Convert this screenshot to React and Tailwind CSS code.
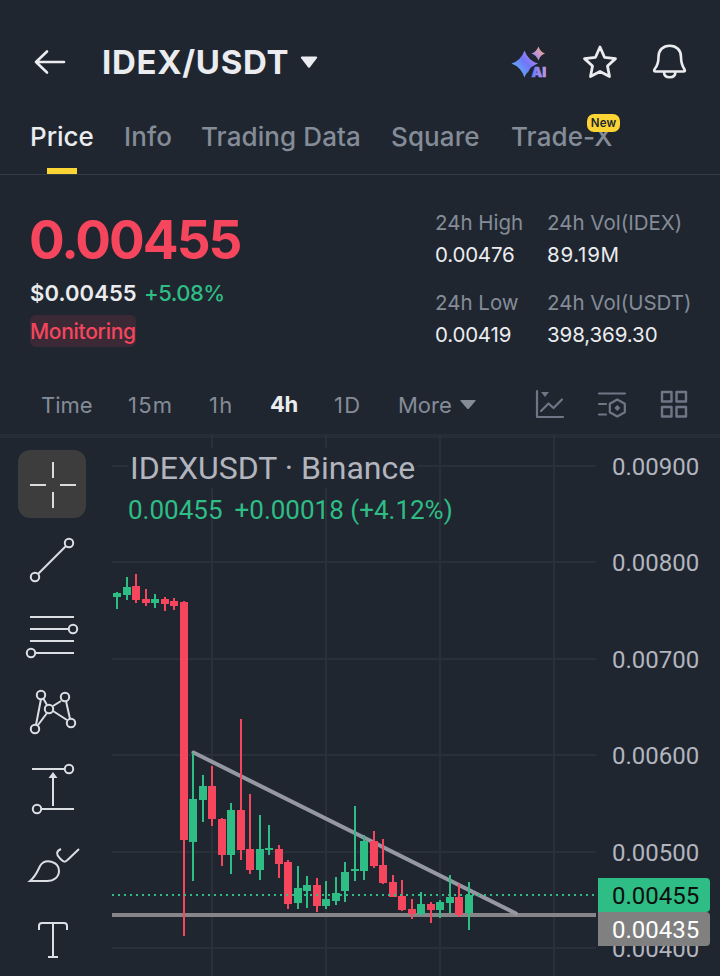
import React from 'react';

const GREEN = '#2ebd85';
const RED = '#f6465d';

const tabs = ['Price', 'Info', 'Trading Data', 'Square', 'Trade-X'];

const stats = [
  { label: '24h High', value: '0.00476' },
  { label: '24h Vol(IDEX)', value: '89.19M' },
  { label: '24h Low', value: '0.00419' },
  { label: '24h Vol(USDT)', value: '398,369.30' },
];

const intervals = ['Time', '15m', '1h', '4h', '1D'];

const axisLabels = ['0.00900', '0.00800', '0.00700', '0.00600', '0.00500', '0.00400'];

// [x, body top, body bottom, wick top, wick bottom, up]
const candles = [
  [113, 593, 597, 592, 609, 1],
  [123, 587, 595, 577, 600, 1],
  [132, 586, 600, 574, 603, 0],
  [142, 599, 603, 589, 606, 0],
  [151, 599, 603, 594, 608, 1],
  [161, 599, 604, 597, 611, 0],
  [170, 601, 606, 598, 610, 0],
  [180, 602, 840, 601, 936, 0],
  [189, 799, 842, 753, 881, 1],
  [199, 786, 800, 775, 822, 1],
  [208, 786, 819, 766, 826, 0],
  [218, 819, 855, 818, 866, 0],
  [227, 810, 855, 803, 874, 1],
  [237, 810, 850, 719, 860, 0],
  [246, 849, 870, 794, 874, 0],
  [256, 849, 870, 815, 880, 1],
  [265, 848, 850, 825, 855, 1],
  [275, 849, 864, 845, 878, 0],
  [284, 862, 904, 860, 909, 0],
  [294, 888, 903, 866, 909, 1],
  [303, 885, 891, 876, 908, 1],
  [313, 885, 906, 878, 912, 0],
  [322, 899, 906, 881, 909, 1],
  [332, 893, 901, 877, 905, 1],
  [341, 872, 891, 862, 902, 1],
  [351, 869, 871, 806, 881, 1],
  [360, 841, 871, 835, 880, 1],
  [370, 841, 866, 831, 868, 0],
  [379, 865, 883, 839, 884, 0],
  [389, 882, 897, 875, 897, 0],
  [398, 896, 910, 880, 911, 0],
  [408, 909, 914, 899, 919, 0],
  [417, 904, 914, 892, 915, 1],
  [427, 904, 910, 902, 923, 0],
  [436, 902, 910, 900, 918, 1],
  [446, 897, 903, 875, 913, 1],
  [455, 897, 915, 884, 917, 0],
  [465, 895, 913, 882, 930, 1],
];

const Header = () => (
  <header className="flex h-28 items-center pt-3 pl-[34px]">
    <svg width="32" height="26" viewBox="34 49 32 26" fill="none" stroke="#eaecef" strokeWidth="2.600" strokeLinecap="round" strokeLinejoin="round">
      <path d="M64 62H36M47 51.5L36 62l11 10.5" />
    </svg>
    <h1 className="ml-9 w-[188px] text-[33px] leading-10 font-bold whitespace-nowrap tracking-[0.7px] text-[#eaecef]">IDEX/USDT</h1>
    <svg className="ml-[10px]" width="18" height="13" viewBox="0 0 18 13" fill="#eaecef">
      <path d="M2 .5h14q2 0 .8 1.700L10 11.200q-1 1.200-2 0L1.200 2.200Q0 .5 2 .5z" />
    </svg>
    <svg className="ml-[193px]" width="38" height="34" viewBox="511 45 38 34">
      <defs>
        <linearGradient id="ai" gradientUnits="userSpaceOnUse" x1="514" y1="74" x2="545" y2="49">
          <stop offset="0" stopColor="#56b9f5" />
          <stop offset="0.42" stopColor="#7375f7" />
          <stop offset="0.68" stopColor="#a78bf2" />
          <stop offset="1" stopColor="#ffad76" />
        </linearGradient>
        <linearGradient id="aiText" x1="0" x2="1">
          <stop offset="0" stopColor="#6878f8" />
          <stop offset="1" stopColor="#c69ae6" />
        </linearGradient>
      </defs>
      <path fill="url(#ai)" d="M524.500 50.500q3.500 10 13.500 13-3 1-5.500 3-2 .5-4 5-2.500 1.500-4 6-3.500-10.500-13-14 9.500-3 13-13z" />
      <path fill="url(#ai)" d="M538.500 46.500q1.700 5.300 6.500 7-4.800 1.700-6.500 7-2.200-5.300-7-7 4.800-1.700 7-7z" />
      <text x="531.500" y="76.500" fill="url(#aiText)" stroke="url(#aiText)" strokeWidth="0.500" fontSize="13.500" fontWeight="900" fontFamily="Inter, sans-serif">AI</text>
    </svg>
    <svg className="ml-[33px]" width="36" height="36" viewBox="582 45 36 36" fill="none" stroke="#eaecef" strokeWidth="2.800" strokeLinejoin="round">
      <path d="M600 48l4.500 10.300 11 1.300-8 7.400 2 10.500-9.500-5-9.500 5 2-10.500-8-7.400 11-1.300z" />
    </svg>
    <svg className="ml-[33px]" width="38" height="40" viewBox="651 42 38 40" fill="none" stroke="#eaecef" strokeWidth="2.600" strokeLinejoin="round">
      <path d="M658.500 57c0-7 4.500-11.200 11.200-11.200S681 50 681 57c0 6 1 8.500 3.300 12 1.300 2 .5 2.500-1 2.500h-27.600c-1.500 0-2.200-.8-1-2.500 3-3.500 3.800-6.500 3.800-12z" />
      <path d="M664 72c0 3.500 2.500 5.300 5.700 5.300s5.700-1.800 5.700-5.300" />
    </svg>
  </header>
);

const Tabs = () => (
  <nav className="grid h-[63px] grid-cols-[94px_77px_190px_120px_auto] border-b border-[#333b45] pl-[30px] text-[26px] leading-[50px] font-medium whitespace-nowrap">
    {tabs.map((tab, i) => (
      <div key={tab} className={i === 0 ? 'relative text-[#eaecef]' : 'relative tracking-[0.1px] text-[#848c98]'}>
        {tab}
        {i === 0 && <span className="absolute bottom-0 left-[17px] h-[6px] w-[30px] bg-[#fcd535]" />}
        {i === 4 && (
          <span className="absolute top-[2px] left-[76px] flex h-[18px] w-[33px] items-center justify-center rounded-[7px] bg-[#fcd535] pt-px text-[11.500px] leading-none font-semibold text-[#202630]">New</span>
        )}
      </div>
    ))}
  </nav>
);

const Summary = () => (
  <section className="flex h-[200px] pt-8 pl-[30px]">
    <div className="w-[405px]">
      <div className="-ml-px h-[66px] text-[53px] leading-[66px] font-[650] tracking-[-2px] text-[#f6465d]">0.00455</div>
      <div className="flex gap-[7px] pt-1 text-[22px] leading-8">
        <span className="w-[107px] font-semibold tracking-[0.1px] text-[#eaecef]">$0.00455</span>
        <span className="font-medium tracking-[-0.5px] text-[#2ebd85]">+5.08%</span>
      </div>
      <div className="mt-[6px] h-8 w-[106px] rounded-md bg-[#3b2a35] text-[21px] leading-[34px] font-medium tracking-[-0.3px] text-[#f6465d]">Monitoring</div>
    </div>
    <div className="grid h-36 grid-cols-[112px_auto] content-start gap-y-4 text-[20.500px] leading-8 whitespace-nowrap">
      {stats.map((s) => (
        <div key={s.label}>
          <div className="text-[#848c98]">{s.label}</div>
          <div className={s.value.startsWith('0.') ? 'tracking-[-0.2px] text-[#eaecef]' : s.value.endsWith('M') ? 'tracking-[0.7px] text-[#eaecef]' : 'tracking-[-0.1px] text-[#eaecef]'}>{s.value}</div>
        </div>
      ))}
    </div>
  </section>
);

const Intervals = () => (
  <div className="flex h-[59px] items-center pl-[41px] text-[22px] whitespace-nowrap text-[#848c98]">
    <div className="grid grid-cols-[87px_81px_61px_64px_64px_auto]">
      {intervals.map((t) => (
        <span key={t} className={t === '4h' ? 'font-bold tracking-[-0.5px] text-[#eaecef]' : t.startsWith('1') ? 'pt-px tracking-[1.200px]' : 'pt-px'}>{t}</span>
      ))}
      <span className="w-[55px] pt-px">More</span>
    </div>
    <svg className="ml-[7px]" width="16" height="10" viewBox="0 0 16 10" fill="#848c98">
      <path d="M1 0h14q1 0 .5 1L9 8.500q-1 1-2 0L.5 1Q0 0 1 0z" />
    </svg>
    <svg className="ml-[58px]" width="32" height="32" viewBox="534 389 32 32" fill="none" stroke="#6f7787" strokeWidth="2.200" strokeLinecap="round" strokeLinejoin="round">
      <path d="M537 391v26h26M541 411l7.500-7.500 5 4.500 8.500-8.500" />
      <path d="M541 392h8l-4 5z" fill="#6f7787" stroke="none" />
    </svg>
    <svg className="ml-[30px]" width="32" height="32" viewBox="596 389 32 32" fill="none" stroke="#6f7787" strokeWidth="2.200" strokeLinecap="round" strokeLinejoin="round">
      <path d="M599 393.500h26M599 404h7M599 414.500h7M617.300 399.500l7.500 4.200v8.600l-7.500 4.200-7.500-4.200v-8.600z" />
      <path d="M617.300 405l3 3-3 3-3-3z" fill="#6f7787" stroke="none" />
    </svg>
    <svg className="ml-[30px]" width="32" height="32" viewBox="658 389 32 32" fill="none" stroke="#6f7787" strokeWidth="2.400" strokeLinejoin="round">
      <path d="M662 392h9.500v9.500H662zM676.500 392h9.500v9.500h-9.500zM662 407h9.500v9.500H662zM676.500 407h9.500v9.500h-9.500z" />
    </svg>
  </div>
);

const Toolbar = () => (
  <div className="w-28 pt-4 pl-[18px]">
    <div className="h-[68px] w-[68px] rounded-xl bg-[#3d3d3d]">
      <svg width="68" height="68" viewBox="18 450 68 68" stroke="#dbdbdb" strokeWidth="2">
        <path d="M53 462v16M53 492v16M30 485h16M60 485h16" />
      </svg>
    </div>
    <svg width="68" height="458" viewBox="18 518 68 458" fill="none" stroke="#dbdfe4" strokeWidth="2">
      <path d="M38 574l28-28" />
      <circle cx="69" cy="543" r="4.200" />
      <circle cx="35" cy="577" r="4.200" />

      <path d="M30 617h44M30 629h38M30 641h44M36 653h38" />
      <circle cx="73" cy="629" r="4.200" />
      <circle cx="31" cy="653" r="4.200" />

      <path d="M36 725l5-26M43 698l4 7M53 706l8-5M66 701l4 18M38 725l9-12M53 711l14 9" />
      <circle cx="41" cy="695" r="4.200" />
      <circle cx="65" cy="697" r="4.200" />
      <circle cx="49" cy="709" r="4.200" />
      <circle cx="71" cy="723" r="4.200" />
      <circle cx="35" cy="729" r="4.200" />

      <path d="M32 769h32M42 809h32M53 806v-30" />
      <path d="M53 772l4.500 6h-9z" fill="#dbdfe4" stroke="none" />
      <circle cx="69" cy="769" r="4.200" />
      <circle cx="37" cy="809" r="4.200" />

      <path d="M30 881c6-5 8-11 10-15 5-8 19-5 19 5 0 6-5 10-12 10z" />
      <path d="M61 849c-5 2-5 6-1 9.500 4 4 5 4 8 1L79 849" />

      <path d="M39 930v-4q0-3 3-3h22q3 0 3 3v4M53 923v34M48 957h10" />
    </svg>
  </div>
);

const Chart = () => (
  <div className="relative w-[484px]">
    <svg className="block" width="484" height="542" viewBox="112 434 484 542">
      <g stroke="#2a3039" strokeWidth="2">
        <path d="M112 466H596M112 562H596M112 659H596M112 755H596M112 852H596M112 948H596" />
        <path d="M212 434V976M326 434V976M440 434V976M554 434V976" />
      </g>
      <path d="M112 915H596" stroke="#868688" strokeWidth="4" />
      <path d="M193.500 752.500L516 913.500" stroke="#9598a3" strokeWidth="4" strokeLinecap="round" />
      {candles.map(([x, top, bottom, high, low, up]) => (
        <g key={x} fill={up ? GREEN : RED}>
          <rect x={x + 3} y={high} width="2" height={low - high} />
          <rect x={x} y={top} width="8" height={bottom - top} />
        </g>
      ))}
      <path d="M112 895H596" stroke={GREEN} strokeWidth="2" strokeDasharray="2 4" />
    </svg>
    <div className="absolute top-[14px] left-4 bg-[#202630] px-[2px] text-[32px] leading-10 whitespace-nowrap text-[#b2b5be]">IDEXUSDT · Binance</div>
    <div className="absolute top-[60px] left-4 flex gap-3 text-[26px] leading-8 whitespace-nowrap text-[#2ebd85]">
      <span>0.00455</span>
      <span>+0.00018 (+4.12%)</span>
    </div>
  </div>
);

const PriceAxis = () => (
  <div className="relative flex-1 pl-4 text-[24px] text-[#b2b5be]">
    {axisLabels.map((label) => (
      <div key={label} className="h-[96.400px] leading-[66px]">{label}</div>
    ))}
    <div className="absolute top-[444px] left-[2px] h-[34px] w-28 rounded-r bg-[#2ebd85] pl-[14px] leading-9 text-[#0b0f0d]">0.00455</div>
    <div className="absolute top-[478px] left-[2px] h-[34px] w-28 rounded-r bg-[#808080] pl-[14px] leading-9 text-white">0.00435</div>
  </div>
);

const App = () => {
  return (
    <div className="h-[976px] w-[720px] overflow-hidden bg-[#202630] font-['Inter',sans-serif]">
      <Header />
      <Tabs />
      <Summary />
      <Intervals />
      <div className="relative flex h-[542px] overflow-hidden font-['Roboto',sans-serif]">
        <div className="absolute inset-x-0 top-0 h-1 bg-[#272d37]" />
        <Toolbar />
        <Chart />
        <PriceAxis />
      </div>
    </div>
  );
};

export default App;
